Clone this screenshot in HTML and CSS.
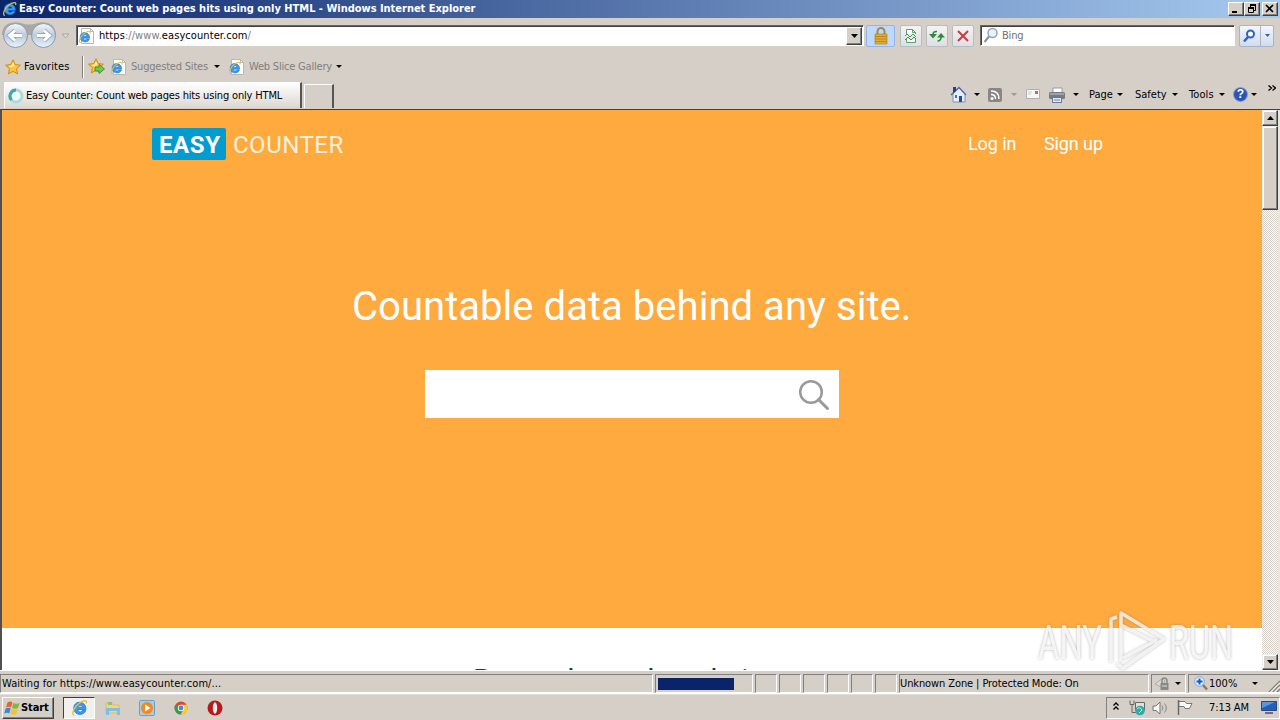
FILE: index.html
```html
<!DOCTYPE html>
<html lang="en">
<head>
<meta charset="utf-8">
<title>Easy Counter</title>
<link rel="stylesheet" href="styles.css">
</head>
<body>
<svg width="0" height="0" class="defs">
  <defs>
    <linearGradient id="orb" x1="0" y1="0" x2="0" y2="1"><stop offset="0" stop-color="#f4f7fa"/><stop offset=".5" stop-color="#bccbdc"/><stop offset="1" stop-color="#e8f4ff"/></linearGradient>
    <symbol id="ie" viewBox="0 0 16 16">
      <path d="M13.300 9.300H6c.2 2.500 3.300 2.900 4 1h3c-1.500 5-10.500 4.500-10.500-2.300 0-7 11-7 10.800 1.300zM6 7.300h4.200c-.2-2.400-3.900-2.400-4.200 0z" fill="#3a9cf0" stroke="#2878d0" stroke-width=".8"/>
      <path d="M3 14.500C-.5 14 3 6.500 7.500 3.500 11.500.8 15 .8 13.500 4" fill="none" stroke="#e9c23c" stroke-width="1.200"/>
    </symbol>
    <symbol id="page" viewBox="0 0 16 16">
      <path d="M2.500.5h9l3 3v12h-12z" fill="#fff" stroke="#b8b8b0"/><path d="M11.500.5v3h3" fill="none" stroke="#b8b8b0"/>
      <use href="#ie" x="-1" y="2" width="14" height="14"/>
    </symbol>
    <symbol id="star" viewBox="0 0 16 16"><path d="M8 .8l2.200 4.800 5.200.6-3.900 3.500 1.100 5.200L8 12.300l-4.600 2.600 1.100-5.200L.6 6.200l5.200-.6z" fill="#fdc53a" stroke="#cf8b10"/><path d="M8 3l1.500 3.500-3 2-3-1.500 3-.5z" fill="#fff0a0"/></symbol>
    <symbol id="dn" viewBox="0 0 5 3" preserveAspectRatio="none"><path d="M0 0h5L2.500 3z" fill="currentColor"/></symbol>
  </defs>
</svg>
<div class="window">
  <header class="title">
    <svg class="title-ic"><use href="#ie"/></svg>
    <span class="title-tx">Easy Counter: Count web pages hits using only HTML - Windows Internet Explorer</span>
    <div class="caps">
      <i class="cap"><svg width="12" height="10"><path d="M2 8h5" stroke="#000" stroke-width="2"/></svg></i>
      <i class="cap"><svg width="12" height="10"><path d="M4 1h6M2 4h6" stroke="#000" stroke-width="2"/><path d="M4.500 1v3M9.500 1v5.500H8M2.500 4v4.500h5V4" fill="none" stroke="#000"/></svg></i>
      <i class="cap close"><svg width="12" height="10"><path d="M2 1l7 7M9 1L2 8" stroke="#000" stroke-width="1.700"/></svg></i>
    </div>
  </header>

  <div class="nav">
    <svg class="orbs" width="56" height="28">
      <path d="M1 13C1 1 12-1 20 1q8 3 16 0C44-1 55 1 55 13" fill="#aaa8a6"/>
      <circle cx="14.500" cy="13.500" r="12" fill="url(#orb)" stroke="#8b98a8"/><circle cx="42.500" cy="13.500" r="12" fill="url(#orb)" stroke="#8b98a8"/>
      <path d="M21 13.500H9m5-5l-5.500 5 5.500 5M36 13.500h12m-5-5l5.500 5-5.500 5" fill="none" stroke="#8fa3ba" stroke-width="4.500"/>
      <path d="M21 13.500H9m5-5l-5.500 5 5.500 5M36 13.500h12m-5-5l5.500 5-5.500 5" fill="none" stroke="#fff" stroke-width="3"/>
    </svg>
    <svg class="recent" width="9" height="6"><path d="M1 1h7L4.500 5z" fill="#ddd" stroke="#aaa6a0"/></svg>
    <div class="address">
      <svg class="i16"><use href="#page"/></svg>
      <span class="url"><b>https</b>://www.<b>easycounter.com</b>/</span>
      <i class="combo"><svg width="7" height="4"><use href="#dn"/></svg></i>
    </div>
    <i class="tool lock"><svg width="16" height="18"><path d="M4.500 8V4.500a3.500 3.500 0 0 1 7 0V8" fill="none" stroke="#9c8a58" stroke-width="2"/><path d="M2 7h12v10H2z" fill="#e5ad2e" stroke="#a87818" stroke-width=".6"/><path d="M2 9.500h12M2 12h12M2 14.500h12" stroke="#bd861d"/></svg></i>
    <i class="tool compat"><svg width="14" height="16"><path d="M2.500 6V1.500h6l3 3V6M2.500 11v3.500h9V11M8.500 1.500v3h3" fill="#fff" stroke="#55a46a"/><path d="M1 8l2-2 3 3 3-3 3 3M1 12l3-3 3 3 3-3 2 2" fill="none" stroke="#429653"/></svg></i>
    <i class="tool refresh"><svg width="16" height="14"><path d="M8 2.500Q4 2 4 6M8.500 12Q12 12 12 8" fill="none" stroke="#2c8b38" stroke-width="1.600"/><path d="M0 5h8L4 9.500zM16 8.500H8L12 4z" fill="#2c8b38"/></svg></i>
    <i class="tool stop"><svg width="14" height="14"><path d="M2 2l10 10M12 2L2 12" stroke="#c83c42" stroke-width="2"/></svg></i>
    <div class="search">
      <svg width="16" height="17"><circle cx="9.500" cy="6" r="4.500" fill="#e5f2fc" stroke="#91a5b8" stroke-width="1.500"/><path d="M6 9.500L1.500 15" stroke="#8b929a" stroke-width="2"/></svg>
      <span>Bing</span>
    </div>
    <div class="go">
      <i><svg width="14" height="14"><circle cx="8.500" cy="5" r="3.500" fill="#fff" stroke="#2c62c8" stroke-width="2"/><path d="M6 8l-4 4.500" stroke="#2c62c8" stroke-width="2.500"/></svg></i>
      <i class="go-dn"><svg width="5" height="3"><use href="#dn"/></svg></i>
    </div>
  </div>

  <div class="favs">
    <svg class="i16"><use href="#star"/></svg>
    <span class="fav-tx">Favorites</span>
    <i class="vsep"></i>
    <svg class="i17"><use href="#star" width="16" height="16"/><path d="M7 9h4V6.500l5.500 4.500-5.500 4.500V13H7z" fill="#6ec654" stroke="#328a28" stroke-width=".8"/></svg>
    <svg class="i16 sug"><use href="#page"/></svg>
    <span class="gray s1">Suggested Sites</span><svg class="dn"><use href="#dn"/></svg>
    <svg class="i16 web"><use href="#page"/></svg>
    <span class="gray s2">Web Slice Gallery</span><svg class="dn"><use href="#dn"/></svg>
  </div>

  <div class="tabs">
    <div class="tab">
      <svg width="16" height="16"><circle cx="8" cy="8" r="6" fill="#eefafa" stroke="#a9dcda" stroke-width="3"/><path d="M3.500 12A6 6 0 0 1 8 2" fill="none" stroke="#3ba9a6" stroke-width="3"/></svg>
      <span>Easy Counter: Count web pages hits using only HTML</span>
    </div>
    <div class="newtab"></div>
    <div class="cmds">
      <svg width="17" height="17"><path d="M3 7v9h12V8L9 2z" fill="#e8effa" stroke="#7e93b8"/><path d="M1 9l8-7.500L16 9" fill="none" stroke="#4f6ea8" stroke-width="1.500"/><path d="M3 1h3v4L3 7z" fill="#253f90"/><path d="M9 10h3v6H9z" fill="#1c4f9c"/><path d="M5 9h2v3H5z" fill="#47a"/></svg>
      <svg class="dn m1"><use href="#dn"/></svg>
      <svg class="rss" width="14" height="14"><rect width="14" height="14" rx="2" fill="#898785"/><circle cx="4" cy="10.500" r="1.500" fill="#fff"/><path d="M3 6.500q4.500 0 4.500 4.500M3 3q8 0 8 8" fill="none" stroke="#fff" stroke-width="1.500"/></svg>
      <svg class="dn m2"><use href="#dn"/></svg>
      <svg class="mail" width="14" height="11"><path d="M.5.5h13v9H.5z" fill="#f7f6f5" stroke="#b3afac"/><path d="M2 3h4M2 5h3" stroke="#ccc"/><path d="M9 2h3v3H9z" fill="#c0666c"/></svg>
      <svg class="print" width="17" height="16"><path d="M4 1h9v5H4z" fill="#fff" stroke="#999"/><rect y="5" width="16" height="7" rx="1.500" fill="#777b80"/><path d="M1 7h14" stroke="#c8ccd0"/><path d="M3.500 10.500h9v5h-9z" fill="#e3edfa" stroke="#678"/><path d="M5 13h6" stroke="#48c"/></svg>
      <svg class="dn m3"><use href="#dn"/></svg>
      <span class="c1">Page</span><svg class="dn"><use href="#dn"/></svg>
      <span class="c2">Safety</span><svg class="dn"><use href="#dn"/></svg>
      <span class="c3">Tools</span><svg class="dn"><use href="#dn"/></svg>
      <i class="help">?</i><svg class="dn m4"><use href="#dn"/></svg>
      <svg class="chev" width="8" height="7"><path d="M.5.5l3 2.500-3 2.500M4.500.5l3 2.500-3 2.500" fill="none" stroke="#000" stroke-width="1.300"/></svg>
    </div>
  </div>

  <div class="view">
    <main class="site">
      <section class="hero">
        <div class="top">
          <div class="brand"><b>EASY</b><span>COUNTER</span></div>
          <nav><a class="login">Log in</a><a class="signup">Sign up</a></nav>
        </div>
        <h1>Countable data behind any site.</h1>
        <div class="query"><svg width="32" height="32"><circle cx="13" cy="13" r="10.800" fill="none" stroke="#999" stroke-width="2.500"/><path d="M20.500 20.500l9 9" stroke="#999" stroke-width="3" stroke-linecap="round"/></svg></div>
      </section>
      <h2>Recently analyzed sites</h2>
    </main>
    <aside class="scroll">
      <i class="sb up"><svg width="7" height="4"><path d="M0 4h7L3.500 0z"/></svg></i>
      <i class="thumb"></i>
      <i class="sb down"><svg width="7" height="4"><use href="#dn"/></svg></i>
    </aside>
  </div>

  <footer class="status">
    <div class="cell wait"><span>Waiting for https://www.easycounter.com/...</span></div>
    <div class="cell prog"><i></i></div>
    <div class="cell sm"></div><div class="cell sm"></div><div class="cell sm"></div><div class="cell sm"></div><div class="cell sm"></div><div class="cell sm"></div>
    <div class="cell zone"><span>Unknown Zone | Protected Mode: On</span></div>
    <div class="cell priv"><svg width="17" height="15"><path d="M1 8l8-6 2 3-4 6z" fill="#d8d8d6" stroke="#aaa"/><path d="M8 7V4.500a2.500 2.500 0 0 1 5 0V7" fill="none" stroke="#888" stroke-width="1.500"/><path d="M6.500 7h8v7h-8z" fill="#888"/><path d="M8 10h5" stroke="#ddd"/></svg><svg class="dn"><use href="#dn"/></svg></div>
    <div class="cell zoom"><svg width="14" height="15"><circle cx="5.500" cy="5.500" r="4.800" fill="#e3f0fc" stroke="#79a8d8"/><path d="M5.500 2.500v6M2.500 5.500h6" stroke="#1c5cbe" stroke-width="2"/><path d="M9 9l4 4.500" stroke="#887868" stroke-width="2.500"/></svg><span>100%</span><svg class="dn"><use href="#dn"/></svg>
      <svg class="grip" width="12" height="12"><path d="M1 12L12 1M5 12l7-7M9 12l3-3" stroke="#85817b" stroke-width="1.500"/><path d="M2.500 12L12 2.500M6.500 12L12 6.500" stroke="#fff"/></svg></div>
  </footer>

  <div class="taskbar">
    <div class="start"><svg width="17" height="16"><path d="M3.500 2.500q3-2 5 0L7 7.500q-2-1.500-5 0z" fill="#e8642c"/><path d="M9.300 3q3 1.500 6.200 0L14 8q-3 1.500-6 0z" fill="#7fb83c"/><path d="M1.700 8.500q3-1.500 5 0L5.200 13.500q-2-1.500-5 0z" fill="#3c85d0"/><path d="M7.700 9q3 1.500 6 0L12.200 14q-3 1.500-6 0z" fill="#f6c22c"/></svg><b>Start</b></div>
    <div class="active"><svg width="18" height="18"><use href="#ie"/></svg></div>
    <svg class="q1" width="16" height="16"><path d="M1 3h6l1 2h6v8H1z" fill="#f1d67a" stroke="#d8b450" stroke-width=".7"/><path d="M3 2h4v3H3z" fill="#8bc17a"/><path d="M1 8h14v7h-3v-4H4v4H1z" fill="#7fbdeb"/></svg>
    <svg class="q2" width="16" height="16"><rect x=".5" y=".5" width="15" height="15" rx="1" fill="#a8cbe8" stroke="#68a0cc"/><circle cx="8" cy="8" r="6" fill="#f08a1c"/><path d="M6 4.500L11.500 8 6 11.500z" fill="#fff"/></svg>
    <svg class="q3" width="14" height="14"><circle cx="7" cy="7" r="6.500" fill="#df4535"/><path d="M1.400 3.800A6.500 6.500 0 0 0 6.500 13.500L9.500 8.500 7 7z" fill="#2e9e4f"/><path d="M7 3.800h5.700A6.500 6.500 0 0 1 6.500 13.500L9.700 8.500z" fill="#fbcd32"/><circle cx="7" cy="7" r="3.200" fill="#fff"/><circle cx="7" cy="7" r="2.400" fill="#4387e8"/></svg>
    <svg class="q4" width="16" height="16"><circle cx="8" cy="8" r="7.500" fill="#b51a1c"/><ellipse cx="8" cy="8" rx="2.200" ry="5.800" fill="#f3ecea"/></svg>
    <div class="tray">
      <svg class="t1" width="6" height="9"><path d="M.5 3.500l2.500-2.500 2.500 2.500M.5 7.500l2.500-2.500 2.500 2.500" fill="none" stroke="#000" stroke-width="1.300"/></svg>
      <svg class="t2" width="16" height="16"><path d="M1 .5v4h4v-4M3 4.500v8h4" fill="none" stroke="#666"/><path d="M6.500 2.500h9v8h-9z" fill="#e2e2dc" stroke="#666"/><circle cx="11" cy="10.500" r="4.800" fill="#35a7a3"/><path d="M8 9q3-3 5 1l-3 3" fill="none" stroke="#b9eeea"/></svg>
      <svg class="t3" width="17" height="14"><path d="M1 5h3l4-4v12L4 9.500H1z" fill="#f8f8f6" stroke="#777"/><path d="M10 4.500q2 2.500 0 5M12.500 2.500q3.500 4.500 0 9" fill="none" stroke="#888"/></svg>
      <svg class="t4" width="16" height="15"><path d="M1.500 0v15" stroke="#666" stroke-width="1.500"/><path d="M2 1.500h6l1.500 2h5.500l-2.500 5H8l-1-2H2z" fill="#f8f8f6" stroke="#777"/></svg>
      <span>7:13 AM</span>
      <svg class="t5" width="16" height="13"><path d="M.5.500h15v9H.5z" fill="#2560b8" stroke="#264a80"/><path d="M1 1h13L1 7z" fill="#5b96dd"/><path d="M4 12h8" stroke="#546" stroke-width="1.500"/></svg>
    </div>
  </div>

  <svg class="mark" width="210" height="62">
    <text x="2" y="49" textLength="64" lengthAdjust="spacingAndGlyphs">ANY</text>
    <text x="133" y="49" textLength="64" lengthAdjust="spacingAndGlyphs">RUN</text>
    <path d="M75 52V9l6-2M85 51V3l43 26-41 29-6-4M85 15l34 17M87 48l34-18" fill="none" stroke="#fff" stroke-opacity=".75" stroke-width="3.500" stroke-linejoin="round"/>
  </svg>
</div>
</body>
</html>
```

FILE: styles.css
```css
* { box-sizing: border-box; }
body { margin: 0; }
.defs { position: absolute; }
svg { display: block; flex: none; }
i { font-style: normal; display: block; flex: none; }
.window {
  position: relative; width: 1280px; height: 720px; overflow: hidden;
  display: flex; flex-direction: column; background: #d5cfc7; color: #000;
  font: 11px/14px "DejaVu Sans Condensed", "DejaVu Sans", sans-serif;
  white-space: nowrap;
}
span { flex: none; }
.i16 { width: 16px; height: 16px; }
.i17 { width: 17px; height: 17px; }
.dn { width: 6px; height: 3px; margin-right: -1px; }

.title { height: 18px; flex: none; display: flex; align-items: center; background: linear-gradient(90deg, #0a246a, #a6caf0); color: #fff; padding: 0 2px; }
.title-ic { width: 16px; height: 16px; }
.title-tx { font-weight: bold; margin-left: 1px; letter-spacing: -.02px; }
.caps { margin-left: auto; display: flex; }
.cap { width: 16px; height: 14px; padding: 1px; background: #d5cfc7; border: 1px solid; border-color: #fff #404040 #404040 #fff; box-shadow: inset -1px -1px #808080; }
.cap.close { margin-left: 2px; }

.nav { height: 35px; flex: none; display: flex; align-items: center; padding-left: 1px; }
.recent { margin-left: 4px; }
.address { margin-left: 6px; width: 788px; height: 21px; border: 1px solid; border-color: #666 #fff #fff #666; box-shadow: inset 1px 1px #404040; background: #fff; display: flex; align-items: center; padding-left: 2px; }
.url { margin-left: 4px; color: #808080; letter-spacing: .08px; }
.url b { font-weight: normal; color: #000; }
.combo { margin-left: auto; width: 16px; height: 18px; margin-right: 1px; background: #d5cfc7; border: 1px solid; border-color: #fff #404040 #404040 #fff; box-shadow: inset -1px -1px #808080; padding: 6px 0 0 4px; }
.tool { height: 22px; width: 22px; border: 1px solid #b9bcc2; border-radius: 2px; background: linear-gradient(#f4f3f3, #dedfe4); display: flex; align-items: center; justify-content: center; }
.lock { width: 29px; margin-left: 2px; background: #bfd8fb; border-color: #92b5e6; }
.compat { margin-left: 5px; }
.refresh, .stop { margin-left: 4px; }
.search { margin-left: 6px; width: 255px; height: 21px; border: 1px solid; border-color: #666 #fff #fff #666; box-shadow: inset 1px 1px #404040; background: #fff; display: flex; align-items: center; padding-left: 2px; color: #707070; }
.search span { margin-left: 3px; letter-spacing: -.2px; }
.go { margin-left: 4px; display: flex; height: 22px; width: 35px; border: 1px solid #aab4c4; border-radius: 2px; background: linear-gradient(#f4f6fa, #cfdcf0); color: #2c62c8; align-items: center; padding-left: 2px; }
.go-dn { margin-left: 4px; border-left: 1px solid #aab4c4; height: 20px; padding: 8px 0 0 4px; }

.favs { height: 27px; flex: none; display: flex; align-items: center; padding-left: 5px; }
.fav-tx { margin-left: 3px; width: 47px; letter-spacing: .1px; }
.vsep { margin: 0 4px 0 11px; width: 2px; height: 22px; background: #808080; border-right: 1px solid #fff; }
.sug { margin-left: 6px; }
.gray { color: #808080; }
.s1 { margin-left: 4px; width: 83px; letter-spacing: -.2px; }
.s2 { margin-left: 4px; width: 87px; letter-spacing: -.2px; }
.web { margin-left: 10px; }

.tabs { height: 29px; flex: none; display: flex; padding-left: 4px; }
.tab { margin-top: 2px; width: 298px; height: 26px; border: 1px solid #fff; border-right: 2px solid #555; border-bottom: 0; background: linear-gradient(#fff, #dcd7d0); display: flex; align-items: center; padding: 1px 0 0 3px; }
.tab span { margin-left: 2px; letter-spacing: -.16px; }
.newtab { margin: 4px 0 0 2px; width: 30px; height: 24px; border: 1px solid #fff; border-right: 2px solid #555; border-bottom: 0; }
.cmds { margin-left: 616px; height: 29px; display: flex; align-items: center; }
.m1 { margin-left: 7px; }
.rss { margin-left: 9px; }
.m2 { margin-left: 9px; color: #999; }
.mail { margin-left: 10px; }
.print { margin-left: 9px; }
.m3 { margin-left: 7px; }
.c1 { margin-left: 11px; width: 28px; }
.c2 { margin-left: 13px; width: 37px; }
.c3 { margin-left: 12px; width: 30px; letter-spacing: .1px; }
.help { margin-left: 9px; width: 15px; height: 15px; border-radius: 8px; background: #2a55b0; border: 1px solid #8aa3d4; color: #fff; font: bold 12px/13px "Liberation Sans", sans-serif; text-align: center; }
.m4 { margin-left: 3px; }
.chev { margin: 0 0 13px 12px; }

.view { height: 561px; flex: none; display: flex; border-top: 1px solid #404040; border-left: 2px solid #505050; }
.site { width: 1260px; height: 560px; overflow: hidden; background: #fff; font-family: Roboto, sans-serif; }
.hero { height: 518px; background: #ffaa3e; padding-top: 18px; color: #fff; display: flex; flex-direction: column; }
.top { display: flex; height: 32px; padding: 0 159px 0 150px; }
.brand { display: flex; font-size: 24px; line-height: 34px; }
.brand b { background: #049ccf; border-radius: 2px; width: 74px; padding-left: 7px; letter-spacing: .6px; font-weight: 700; height: 32px; }
.brand span { margin-left: 7px; font-weight: 400; color: #fff0dc; letter-spacing: .5px; }
nav { margin-left: auto; display: flex; font-size: 18px; line-height: 32px; letter-spacing: -.1px; }
.login { width: 48px; margin-right: 28px; }
.signup { width: 59px; }
h1 { margin: 123px 0 0 350px; font-size: 40px; line-height: 48px; font-weight: 400; letter-spacing: .04px; }
.query { margin: 39px 0 0 423px; width: 414px; height: 48px; background: #fff; display: flex; justify-content: flex-end; padding: 9px 9px 0 0; }
h2 { margin: 34px 0 0; text-align: center; font-size: 30px; line-height: 36px; font-weight: 400; color: #333; letter-spacing: .3px; }
.scroll { width: 18px; height: 560px; display: flex; flex-direction: column; border-right: 2px solid #e9e6e2; background: repeating-conic-gradient(#fff 0 25%, #d5cfc7 0 50%) 0 0 / 2px 2px; }
.sb { width: 16px; height: 16px; background: #d5cfc7; border: 1px solid; border-color: #eee #404040 #404040 #eee; box-shadow: inset -1px -1px #808080, inset 1px 1px #fff; padding: 5px 0 0 4px; }
.thumb { width: 16px; height: 84px; background: #d5cfc7; border: 1px solid; border-color: #eee #404040 #404040 #eee; box-shadow: inset -1px -1px #808080, inset 1px 1px #fff; }
.down { margin-top: auto; }

.status { height: 24px; flex: none; display: flex; padding-top: 3px; border-top: 1px solid #fff; border-bottom: 1px solid #fff; }
.cell { height: 19px; border: 1px solid; border-color: #808080 #fff #fff #808080; margin-right: 2px; display: flex; align-items: center; flex: none; }
.wait { width: 653px; padding-left: 1px; letter-spacing: .07px; }
.prog { width: 98px; padding-left: 2px; }
.prog i { width: 76px; height: 12px; background: #0a246a; }
.sm { width: 22px; }
.zone { width: 250px; letter-spacing: -.1px; }
.priv { width: 35px; padding-left: 2px; }
.priv .dn { margin-left: 4px; }
.zoom { width: 93px; margin: 0; padding-left: 5px; border-right: 0; }
.zoom span { margin-left: 1px; width: 29px; }
.zoom .dn { margin-left: 14px; }
.grip { margin: 5px 0 0 11px; }

.taskbar { height: 26px; flex: none; display: flex; align-items: center; padding-left: 2px; border-top: 1px solid #e2dfda; }
.start { width: 52px; height: 22px; border: 1px solid; border-color: #fff #404040 #404040 #fff; box-shadow: inset -1px -1px #808080; display: flex; align-items: center; padding-left: 1px; }
.start b { letter-spacing: -.1px; }
.active { margin-left: 9px; width: 32px; height: 22px; border: 1px solid; border-color: #404040 #fff #fff #404040; background: #f2f0ed; padding: 1px 0 0 7px; }
.q1 { margin-left: 10px; }
.q2 { margin-left: 18px; }
.q3 { margin-left: 19px; }
.q4 { margin-left: 19px; }
.tray { margin-left: auto; width: 174px; height: 22px; border: 1px solid; border-color: #808080 #fff #fff #808080; display: flex; align-items: center; padding-left: 6px; }
.t1 { margin-bottom: 3px; }
.t2 { margin-left: 10px; }
.t3 { margin-left: 7px; }
.t4 { margin-left: 8px; }
.tray span { margin-left: 16px; width: 41px; letter-spacing: -.1px; }
.t5 { margin-left: 11px; }
.mark { position: absolute; left: 1036px; top: 610px; font: 49px Roboto, sans-serif; fill: rgba(255, 255, 255, .8); filter: drop-shadow(0 0 1.500px rgba(110, 110, 110, .6)); }
```
